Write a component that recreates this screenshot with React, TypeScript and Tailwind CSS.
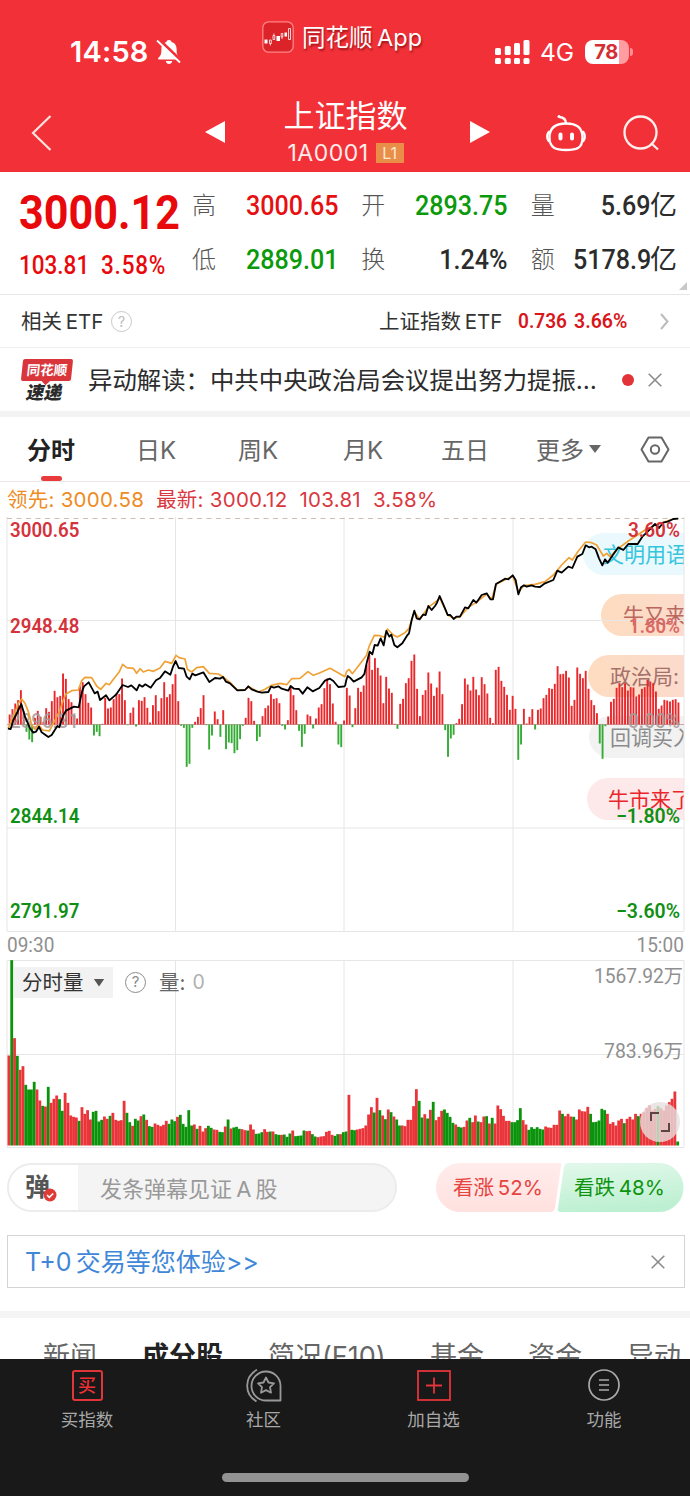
import type { ReactNode } from 'react';
import clsx from 'clsx';

// One value per trading minute, in thirds of a pixel. Above / below the zero line.
const MOMENTUM = [
  30, 46, 63, 73, 103, 40, -22, -45, -53, 20, 41, 23, 8, 49, 38, 70, 101, 82, 86, 153, 137, 76, 67, 28, 18, 115, 127, 91, 65, 51,
  -33, -22, -35, 2, 80, 48, 51, 76, 93, 91, 138, 73, -2, 35, 51, -6, 73, 71, 82, 50, 6, 58, 88, 40, 79, 127, 82, 91, 121, 151,
  70, -4, -10, -127, -118, -10, 8, 23, 49, 88, -2, -75, -33, 39, 16, -37, 43, -74, -54, -56, -86, -77, -44, -4, 20, 80, 70, 11, -50, -37,
  25, 49, 57, 91, 77, 79, 64, -4, -15, 13, 113, 88, 43, -19, -67, -28, 30, 25, -12, 18, 51, 61, 109, 138, 121, 63, 8, -60, -68, 12,
  110, 87, -8, 49, 110, 98, 117, 179, 209, 164, 199, 170, 147, 64, 143, 108, 95, 2, -13, 62, 77, 124, 139, 191, 210, 107, 25, 89, 103, 156,
  123, 86, 111, 159, 91, -17, -97, -42, -31, 4, 17, 61, 138, 120, 102, 143, 105, 88, 142, 121, 93, 20, 4, 164, 173, 131, 113, 89, 44, 86,
  47, -106, -60, 47, 3, 23, 46, -15, 44, 48, 79, 89, 109, 107, 122, 175, 151, 152, 161, 141, 56, 74, 171, 152, 139, 161, 107, 73, 58, 34,
  -57, -103, -5, 24, 68, 77, 110, 124, 112, 124, 102, 112, 111, 84, 90, 107, 112, 134, 129, 124, 99, 47, 57, 74, 72, 69, 74, 76, 66,
];

// Same unit. Positive is a rising minute (red), negative a falling one (green).
const VOLUME = [
  270, -556, 322, -269, 227, 238, -182, -168, -168, -191, 168, 135, -119, 117, -176, 128, 140, 150, -139, -104, 158, 128, 90, 86, 84, -74, 115, 95, 106, 78,
  -101, -104, -72, -77, 87, 80, -89, 98, 77, 74, 76, 134, -98, -70, 59, -80, -75, 88, -93, 77, -58, -56, 66, 62, 58, 62, 74, -65, -78, -73,
  86, -92, -65, -56, -106, -60, 63, -50, 59, 42, 52, -59, -53, 48, 47, -41, -40, 57, -78, 51, -54, -56, -50, 49, 46, -45, 63, 48, -35, -36,
  -40, 49, 41, -42, 42, -34, -32, 32, -33, -26, -36, 45, -28, -29, -30, -45, 43, 44, -34, -27, 25, 27, 28, 41, 44, 32, -29, -34, 34, -40,
  -42, 152, -47, -46, 48, 50, 52, 60, 93, 115, -99, 143, -106, 90, -79, 108, -100, 87, -78, -60, 60, 58, 77, 77, 118, 169, -134, -84, 94, -81,
  107, -131, 76, 86, 104, -108, -98, -86, -68, 63, -56, -54, 56, 75, -83, 70, 90, -72, 70, 87, -88, 66, -83, 66, 120, 109, 89, 74, 74, -70,
  -70, -76, -112, 76, 63, -47, -55, -50, -55, -50, -48, 57, 54, 53, 62, 62, 105, -95, 88, 95, 87, -86, 78, 108, 103, 102, 116, -95, -70, -71,
  -75, -110, -106, 95, 65, 70, 60, 75, 80, -67, 80, 86, 78, 95, -88, 95, 100, 112, 120, 105, 110, -118, 112, 105, 120, 130, 140, 162, -12,
];

const PRICE_AM =
  '24,386 32,387 40,360 48,345 64,312 75,350 90,385 100,398 108,395 117,380 125,397 145,411 155,405 172,378 178,382 190,345 198,332 222,320 236,322 246,275 252,259 266,247 276,265 284,280 293,275 300,300 318,286 328,301 348,284 368,255 384,261 394,256 410,271 418,254 427,260 436,253 452,263 468,241 480,234 495,214 511,224 519,200 527,183 536,204 552,206 560,230 569,238 577,221 586,226 610,217 628,246 645,234 660,236 669,231 678,245 690,250 712,271 735,270 745,259 755,268 770,274 785,278 805,276 813,260 822,263 835,259 845,266 865,272 872,258 882,266 897,267 908,281 922,262 938,274 958,264 975,242 990,236 1000,243 1015,261 1035,259';
const PRICE_PM =
  '0,259 4,240 8,228 15,233 26,245 50,232 58,222 66,185 74,155 82,163 89,135 98,137 107,115 116,136 124,93 133,110 139,104 148,135 157,142 172,130 186,107 192,100 200,60 208,32 215,55 224,58 234,44 242,45 250,18 260,30 270,18 276,8 284,-12 300,25 308,45 316,45 326,57 334,50 345,50 360,22 370,25 385,0 394,8 410,-15 425,-20 436,-2 444,-2 453,-48 470,-58 480,-64 490,-62 503,-74 512,-60 520,-17 528,-38 537,-44 545,-40 560,-44 570,-40 585,-39 600,-50 625,-60 637,-88 650,-82 670,-100 682,-96 697,-130 712,-138 722,-164 732,-158 740,-160 752,-152 762,-125 772,-104 780,-122 788,-112 800,-130 820,-158 835,-150 850,-168 878,-168 892,-190 905,-202 930,-228 942,-216 955,-232 968,-235 985,-243 1000,-244';
const LEAD_AM =
  '24,386 40,350 55,310 65,297 75,310 85,335 95,375 105,388 116,375 128,390 148,393 160,370 178,335 190,300 197,283 215,272 235,270 245,242 255,232 275,233 290,258 302,268 318,250 328,254 345,232 358,215 368,193 380,203 400,205 410,220 420,206 430,216 445,210 460,214 480,204 495,184 515,190 528,166 537,173 555,177 562,208 575,216 590,203 610,200 628,220 655,222 668,230 690,247 712,270 735,270 747,260 775,276 795,268 815,256 840,250 860,254 875,236 900,235 924,215 940,226 960,218 990,205 1010,216 1035,230';
const LEAD_PM =
  '0,230 5,214 12,208 22,221 35,205 50,185 65,165 72,140 88,106 105,107 118,112 127,87 145,105 157,111 180,98 192,85 200,60 208,35 224,58 250,22 285,-5 308,45 326,55 345,50 370,22 394,7 425,-18 440,-2 453,-47 503,-72 520,-25 537,-43 570,-47 600,-55 625,-75 650,-105 672,-127 682,-120 700,-147 722,-174 740,-172 755,-165 775,-132 785,-140 795,-130 820,-155 850,-177 900,-210 930,-225 985,-243';

const BAR_STEP = 2.81;

const quotes = [
  { label: '高', value: '3000.65', color: 'text-[#e60f12]' },
  { label: '开', value: '2893.75', color: 'text-[#0b9a0b]' },
  { label: '量', value: '5.69', unit: '亿', color: 'text-[#2c2c2c]' },
  { label: '低', value: '2889.01', color: 'text-[#0b9a0b]' },
  { label: '换', value: '1.24%', color: 'text-[#2c2c2c]' },
  { label: '额', value: '5178.9', unit: '亿', color: 'text-[#2c2c2c]' },
];

const bullets = [
  { text: '文明用语', box: 'top-[16px] left-[583px] pl-[20px] bg-[#e9f9fe] text-[#35c5dc]' },
  { text: '牛又来了', box: 'top-[77px] left-[601px] pl-[22px] bg-linear-to-r from-[#fddcc0] to-[#fbdad2] text-[#b9675f]' },
  { text: '政治局:', box: 'top-[138px] left-[588px] pl-[22px] bg-linear-to-r from-[#fddcc0] to-[#fbdad2] text-[#a5716b]' },
  { text: '回调买入', box: 'top-[199px] left-[589px] pl-[21px] bg-[#f2f2f2] text-[#8c8c8c]' },
  { text: '牛市来了', box: 'top-[261px] left-[587px] pl-[21px] bg-[#fde9ea] text-[#e8262b]' },
];

function Num({ className, children }: { className?: string; children: ReactNode }) {
  return <span className={clsx('inline-block font-[Roboto]', className)}>{children}</span>;
}

function Label({ x, y, w, fill, children, end, weight = 600 }: {
  x: number;
  y: number;
  w: number;
  fill: string;
  children: string;
  end?: boolean;
  weight?: number;
}) {
  return (
    <text
      x={x}
      y={y}
      fill={fill}
      textLength={w}
      lengthAdjust="spacingAndGlyphs"
      textAnchor={end ? 'end' : 'start'}
      fontFamily="Roboto, 'Noto Sans CJK SC', sans-serif"
      fontSize="19.5"
      fontWeight={weight}
    >
      {children}
    </text>
  );
}

function CloseIcon({ className }: { className?: string }) {
  return (
    <svg className={className} viewBox="0 0 14 14" fill="none" stroke="#8c8c8c" strokeWidth="1.6">
      <path d="M.7.7l12.6 12.6M13.3.7L.7 13.3" />
    </svg>
  );
}

function StatusBar() {
  return (
    <div className="flex h-[80px] text-white">
      <div className="mt-[36px] ml-[70px] flex h-[32px] w-[192px] items-center">
        <span className="w-[85px] text-[29px] font-semibold tracking-[0.2px]">14:58</span>
        <svg className="h-[26px] w-[27px]" viewBox="0 0 27 26">
          <path
            d="M14 1c1.600 0 2.400.8 2.600 1.900 3.500 1 5 3.900 5 7.300 0 5.600 1.100 6.700 3 8.600.7.700.4 1.700-.6 1.700H4c-1 0-1.300-1-.6-1.700 1.900-1.900 3-3 3-8.600 0-3.400 1.500-6.300 5-7.300C11.600 1.800 12.400 1 14 1zM10.800 22h6.400c-.3 1.800-1.500 3-3.200 3s-2.900-1.200-3.200-3z"
            fill="#fff"
          />
          <path d="M3.500 0l23 22" stroke="#f23038" strokeWidth="3" />
          <path d="M2 1.500l23 22" stroke="#fff" strokeWidth="1.800" />
        </svg>
      </div>
      <div className="mt-[20px] flex h-[34px] w-[233px] items-center">
        <svg className="mr-[8px] h-[32px] w-[32px]" viewBox="0 0 32 32">
          <rect x=".8" y=".8" width="30.400" height="30.400" rx="6" fill="#dc2329" stroke="#ff8585" strokeWidth="1.300" />
          <path d="M2.500 18.500h3v4h-3zM14.500 15h3.500v5h-3.500zM22.500 11.500h2.500v4h-2.500z" fill="#fff" />
          <path d="M7.500 19h1.800v3.500H7.500zM11 14.500h1.800v4H11zM19.200 12.500h1.600v3.500h-1.600zM26.500 7.500h2v11h-2zM8.400 22.500v2M11.900 12.500v2M20 16v2" fill="none" stroke="#fff" strokeWidth=".8" />
        </svg>
        <span className="pt-[2px] text-[23.5px] whitespace-nowrap [text-shadow:1px_2px_2px_rgba(90,0,0,0.55)] [word-spacing:-2px]">同花顺 App</span>
      </div>
      <div className="mt-[36px] flex h-[32px] items-center">
        <svg className="h-[25px] w-[36px]" viewBox="0 0 36 25" fill="#fff">
          <rect x="0" y="8" width="6" height="7" rx="1.500" />
          <rect x="9.800" y="6" width="6" height="9" rx="1.500" />
          <rect x="19" y="3" width="6" height="12" rx="1.500" />
          <rect x="28.500" y="0" width="6" height="15" rx="1.500" />
          <rect x="0" y="18" width="6" height="6" rx="1.500" />
          <rect x="9.800" y="18" width="6" height="6" rx="1.500" />
          <rect x="19" y="18" width="6" height="6" rx="1.500" />
          <rect x="28.500" y="18" width="6" height="6" rx="1.500" />
        </svg>
        <span className="ml-[9px] w-[45px] text-[24.5px] tracking-[-0.2px]">4G</span>
        <div className="flex h-[24px] w-[44px] items-center justify-center rounded-[8px] bg-linear-to-r from-white from-78% to-[#ff9da0] to-78% pr-[2px] text-[20px] font-bold tracking-[-0.5px] text-[#d32f35]">
          78
        </div>
        <div className="ml-[1px] h-[8px] w-[3px] rounded-r-full bg-[#ff8f93]" />
      </div>
    </div>
  );
}

function TitleBar() {
  return (
    <div className="flex h-[92px] items-center text-white">
      <svg className="mt-[13px] ml-[31px] h-[36px] w-[21px]" viewBox="0 0 21 36" fill="none" stroke="#ffe3df" strokeWidth="2.200">
        <path d="M19.500 1L2 18l17.500 17" />
      </svg>
      <svg className="mt-[11px] ml-[153px] h-[22px] w-[20px]" viewBox="0 0 20 22" fill="#fff">
        <path d="M20 0v22L0 11z" />
      </svg>
      <div className="flex w-[241px] flex-col items-center pt-[9px]">
        <h1 className="text-[31px] leading-[40px]">上证指数</h1>
        <div className="mt-[5px] flex h-[24px] items-center text-[23px] text-[#ffeceb]">
          <span className="tracking-[0.5px]">1A0001</span>
          <span className="ml-[7px] flex h-[20px] w-[28px] items-center justify-center bg-[#e98e48] text-[16px] text-[#ffe9cf]">L1</span>
        </div>
      </div>
      <svg className="mt-[11px] ml-[4px] h-[22px] w-[20px]" viewBox="0 0 20 22" fill="#fff">
        <path d="M0 0v22l20-11z" />
      </svg>
      <svg className="mt-[13px] ml-[56px] h-[38px] w-[40px]" viewBox="0 0 40 38" fill="none" stroke="#fff" strokeWidth="2.300">
        <path d="M20 9.500c9 0 16.500 2.500 16.500 14S30 36 20 36 3.500 34 3.500 23.500 11 9.500 20 9.500z" />
        <path d="M3.500 17.500c-3 2-3 8 0 10M36.500 17.500c3 2 3 8 0 10" />
        <path d="M20 9.500c0-4-2-6-6.500-6.500" />
        <circle cx="13" cy="2.500" r="1.500" fill="#fff" stroke="none" />
        <path d="M14.500 20.500v4M26 20.500v4" strokeWidth="4" strokeLinecap="round" />
      </svg>
      <svg className="mt-[13px] ml-[37px] h-[36px] w-[36px]" viewBox="0 0 36 36" fill="none" stroke="#ffefed" strokeWidth="2.300">
        <circle cx="17.500" cy="17.500" r="16" />
        <path d="M28 28l7 6.500" />
      </svg>
    </div>
  );
}

function QuotePanel() {
  return (
    <section className="relative flex h-[123px] border-b border-[#e6e6e6]">
      <div className="w-[173px] pl-[19px] text-[#e8090c]">
        <Num className="mt-[12px] block h-[58px] origin-left scale-x-[0.88] text-[49px] leading-[58px] font-bold">3000.12</Num>
        <div className="mt-[9px] flex text-[25px] leading-[30px] font-medium">
          <Num className="w-[84px] origin-left scale-x-[0.9]">103.81</Num>
          <Num className="origin-left scale-x-[0.9] tracking-[0.9px]">3.58%</Num>
        </div>
      </div>
      <div className="mt-[7px] ml-[19px] grid h-[108px] w-[485px] grid-cols-3 grid-rows-2 gap-x-[23px]">
        {quotes.map((q) => (
          <div key={q.label} className="flex items-center justify-between">
            <span className="text-[24px] font-light text-[#555]">{q.label}</span>
            <span className={clsx('flex items-center', q.color)}>
              <Num className="origin-right scale-x-[0.93] text-[27px] font-medium">{q.value}</Num>
              {q.unit && <span className="-ml-px text-[27px]">{q.unit}</span>}
            </span>
          </div>
        ))}
      </div>
      <div className="absolute right-[3px] bottom-[4px] h-[8px] w-[8px] bg-[#c8c8c8] [clip-path:polygon(100%_0,100%_100%,0_100%)]" />
    </section>
  );
}

function EtfRow() {
  return (
    <section className="flex h-[53px] items-center border-b border-[#f0f0f0] pl-[21px] text-[20.5px] text-[#333]">
      <span className="w-[90px] pt-[2px] whitespace-nowrap [word-spacing:-2px]">相关 ETF</span>
      <span className="flex h-[21px] w-[21px] items-center justify-center rounded-full border-[1.5px] border-[#c8c8c8] text-[14px] text-[#bbb]">?</span>
      <span className="ml-[247px] w-[139px] pt-[2px] whitespace-nowrap [word-spacing:-2px]">上证指数 ETF</span>
      <Num className="w-[56px] origin-left scale-x-[0.93] text-[20.5px] font-semibold text-[#d9161b]">0.736</Num>
      <Num className="w-[86px] origin-left scale-x-[0.95] text-[20.5px] font-semibold text-[#d9161b]">3.66%</Num>
      <svg className="h-[17px] w-[9px]" viewBox="0 0 9 17" fill="none" stroke="#bbb" strokeWidth="2">
        <path d="M1 1l6.500 7.500L1 16" />
      </svg>
    </section>
  );
}

function NewsRow() {
  return (
    <section className="flex h-[63px] items-center pl-[22px]">
      <div className="flex w-[66px] flex-col">
        <div className="relative flex h-[22px] w-[50px] -skew-x-6 items-center justify-center rounded-[2px] bg-[#d9363c] text-[13.5px] font-bold text-white">
          同花顺
          <span className="absolute -bottom-[3px] left-[22px] h-[6px] w-[6px] rotate-45 bg-[#d9363c]" />
        </div>
        <div className="h-[20px] -skew-x-12 pl-[5px] text-[18px] leading-[23px] font-black text-[#2b2b2b]">速递</div>
      </div>
      <p className="w-[534px] pt-[2px] text-[24.4px] whitespace-nowrap text-[#2c2c2c]">异动解读：中共中央政治局会议提出努力提振…</p>
      <span className="h-[12px] w-[12px] rounded-full bg-[#e23338]" />
      <CloseIcon className="ml-[14px] h-[14px] w-[14px]" />
    </section>
  );
}

function PeriodTabs() {
  return (
    <nav className="relative flex h-[65px] items-center border-b border-[#f0e8e8] pt-[3px] text-[24px] text-[#666]">
      <span className="ml-[27px] w-[109px] font-bold text-[#222]">分时</span>
      <span className="w-[102px]">日K</span>
      <span className="w-[105px]">周K</span>
      <span className="w-[98px]">月K</span>
      <span className="w-[95px]">五日</span>
      <span className="w-[53px] whitespace-nowrap">更多</span>
      <span className="mb-[3px] h-[8px] w-[12px] bg-[#666] [clip-path:polygon(0_0,100%_0,50%_100%)]" />
      <svg className="mb-[3px] ml-[39px] h-[27px] w-[30px]" viewBox="0 0 30 27" fill="none" stroke="#666" strokeWidth="2">
        <path d="M8.500 1.500h13l7 12-7 12h-13l-7-12z" strokeLinejoin="round" />
        <circle cx="15" cy="13.500" r="4.200" />
      </svg>
      <span className="absolute bottom-0 left-[41px] h-[5px] w-[21px] rounded-full bg-[#e93a3c]" />
    </nav>
  );
}

function PriceChart() {
  return (
    <section className="relative h-[415px]">
      <div className="absolute inset-y-0 left-0 w-[684px] overflow-hidden">
        {bullets.map((b) => (
          <div key={b.text} className={clsx('absolute flex h-[42px] w-[140px] items-center rounded-l-full pt-[2px] text-[21px] whitespace-nowrap', b.box)}>
            {b.text}
          </div>
        ))}
      </div>
      <svg className="relative block h-[415px] w-[690px]" viewBox="0 517 690 415" fill="none">
        <path d="M7 517V931.500H684V517M175.500 517V931M344 517V931M513 517V931M7 620.500H684M7 828H684" stroke="#e6e6e6" />
        <path d="M7 518.500H684" stroke="#cdbfae" strokeDasharray="5 4.500" />
        <path d="M7 724.500H684" stroke="#c9a8a8" />
        {MOMENTUM.map((v, i) => (
          <rect
            key={i}
            x={8.7 + i * BAR_STEP}
            y={v > 0 ? 724.5 - v / 3 : 724.5}
            width="1.900"
            height={Math.abs(v) / 3}
            fill={v > 0 ? '#e8282b' : '#35ab35'}
          />
        ))}
        <g opacity=".85">
          <Label x={10} y={728} w={69} fill="#a79a9a" weight={500}>2896.31</Label>
          <Label x={680} y={728} w={52} fill="#a79a9a" end weight={500}>0.00%</Label>
        </g>
        <g strokeLinejoin="round" strokeWidth="5">
          <g transform="translate(0 600) scale(.33333)">
            <polyline points={LEAD_AM} stroke="#efa136" />
            <polyline points={PRICE_AM} stroke="#000" strokeWidth="5.500" />
          </g>
          <g transform="translate(345 600) scale(.33333)">
            <polyline points={LEAD_PM} stroke="#efa136" />
            <polyline points={PRICE_PM} stroke="#000" strokeWidth="5.500" />
          </g>
        </g>
        <Label x={10} y={537} w={69.5} fill="#d5333b">3000.65</Label>
        <Label x={10} y={632.5} w={69.5} fill="#d5333b">2948.48</Label>
        <Label x={10} y={823} w={69.5} fill="#0f8f14">2844.14</Label>
        <Label x={10} y={918} w={69.5} fill="#0f8f14">2791.97</Label>
        <Label x={680} y={537} w={52} fill="#d5333b" end>3.60%</Label>
        <Label x={680} y={632.5} w={51} fill="#dc6a66" end>1.80%</Label>
        <Label x={680} y={823} w={64} fill="#0f8f14" end>−1.80%</Label>
        <Label x={680} y={918} w={64} fill="#0f8f14" end>−3.60%</Label>
      </svg>
    </section>
  );
}

function VolumeChart() {
  return (
    <section className="relative h-[188px]">
      <svg className="block h-[188px] w-[690px]" viewBox="0 960 690 188" fill="none">
        <path d="M7 960.500H684V1147.500H7zM175.500 960V1147M344 960V1147M513 960V1147M7 1054.500H684" stroke="#e6e6e6" />
        {VOLUME.map((v, i) => (
          <rect
            key={i}
            x={7.5 + i * BAR_STEP}
            y={1145.5 - Math.abs(v) / 3}
            width={BAR_STEP}
            height={Math.abs(v) / 3}
            fill={v > 0 ? '#e93539' : '#0b930b'}
          />
        ))}
        <Label x={683} y={982.5} w={89} fill="#8f8f8f" end weight={400}>1567.92万</Label>
        <Label x={683} y={1058} w={79} fill="#8f8f8f" end weight={400}>783.96万</Label>
      </svg>
      <div className="absolute top-[7px] left-[14px] flex h-[31px] items-center text-[20.5px] text-[#333]">
        <span className="flex h-[31px] w-[99px] items-center bg-[#f2f2f2] pl-[8px]">
          <span className="pt-[2px]">分时量</span>
          <span className="ml-[10px] h-[8px] w-[11px] bg-[#555] [clip-path:polygon(0_0,100%_0,50%_100%)]" />
        </span>
        <span className="ml-[12px] flex h-[21px] w-[21px] items-center justify-center rounded-full border-[1.5px] border-[#8c8c8c] text-[15px] text-[#8c8c8c]">?</span>
        <span className="ml-[13px] pt-[2px] text-[#666]">量:</span>
        <span className="ml-[7px] pt-[1px] text-[19.5px] text-[#b0b0b0]">0</span>
      </div>
      <div className="absolute top-[142px] left-[640px] flex h-[40px] w-[40px] items-center justify-center rounded-full bg-[#e6dede]/80">
        <svg className="h-[20px] w-[20px]" viewBox="0 0 20 20" fill="none" stroke="#5d4444" strokeWidth="2">
          <path d="M1 9V1h8M19 11v8h-8" />
        </svg>
      </div>
    </section>
  );
}

function BulletInput() {
  return (
    <section className="mt-[15px] flex h-[49px] pl-[7px]">
      <div className="flex h-[49px] w-[390px] overflow-hidden rounded-full border-2 border-[#ececec] bg-[#f4f4f4]">
        <div className="relative w-[69px] bg-white pt-[3px] pl-[16px] text-[25px] leading-[38px] font-bold text-[#555]">
          弹
          <svg className="absolute top-[23px] left-[34px] h-[14px] w-[14px]" viewBox="0 0 14 14" fill="none">
            <circle cx="7" cy="7" r="6.500" fill="#df3a35" />
            <path d="M4 7l2.300 2.300L10.200 5.500" stroke="#fff" strokeWidth="1.600" />
          </svg>
        </div>
        <span className="pl-[22px] text-[22px] leading-[48px] whitespace-nowrap text-[#999] [word-spacing:-2px]">发条弹幕见证 A 股</span>
      </div>
      <div className="relative ml-[38px] flex h-[49px] w-[249px] items-center text-[20.5px]">
        <svg className="absolute inset-0 h-[49px] w-[249px]" viewBox="0 0 249 49">
          <defs>
            <linearGradient id="up" x2="0" y2="1">
              <stop stopColor="#ffeceb" />
              <stop offset="1" stopColor="#ffe1df" />
            </linearGradient>
            <linearGradient id="down" x2=".2" y2="1">
              <stop stopColor="#e3f8eb" />
              <stop offset="1" stopColor="#bdf0d2" />
            </linearGradient>
          </defs>
          <path d="M25.500 0H124q3 0 2 3l-6 42q-1 4-5 4H25.500a24.500 24.500 0 010-49z" fill="url(#up)" />
          <path d="M133 0h91a24.500 24.500 0 010 49H126q-4 0-3-4l6-41q1-4 4-4z" fill="url(#down)" />
        </svg>
        <span className="relative w-[121px] pt-[2px] pl-[18px] whitespace-nowrap text-[#e8443f] [word-spacing:-2px]">看涨 52%</span>
        <span className="relative pt-[2px] pl-[18px] whitespace-nowrap text-[#0f930f] [word-spacing:-2px]">看跌 48%</span>
      </div>
    </section>
  );
}

function TabBar() {
  return (
    <footer className="relative h-[137px] bg-[#191919] pt-[10px]">
      <div className="grid grid-cols-[174px_179px_161px_180px] justify-items-center text-[17.500px] leading-[26px] text-[#a8a8a8]">
        <div className="flex flex-col items-center">
          <div className="mt-[1px] mb-[6px] flex h-[31px] w-[31px] items-center justify-center rounded-[3px] border-2 border-[#e2353a] text-[18px] leading-none font-medium text-[#ee3035]">买</div>
          买指数
        </div>
        <div className="flex flex-col items-center">
          <svg className="mb-[5px] h-[33px] w-[36px]" viewBox="0 0 36 33" fill="none" stroke="#999" strokeWidth="1.800">
            <path d="M34.500 31.500V16.500A14.500 14.500 0 1020 31.500z" strokeLinejoin="round" />
            <path d="M11 .8C-2 8-2 25 10.500 32.500" />
            <path d="M20 8.500l2.500 5 5.500.8-4 3.900 1 5.500-5-2.600-5 2.600 1-5.500-4-3.900 5.500-.8z" strokeLinejoin="round" />
          </svg>
          社区
        </div>
        <div className="flex flex-col items-center">
          <svg className="mt-[1px] mb-[6px] h-[31px] w-[34px]" viewBox="0 0 34 31" fill="none" stroke="#e2353a" strokeWidth="1.800">
            <rect x="1" y="1" width="32" height="29" />
            <path d="M17 7.500v16M9 15.500h16" />
          </svg>
          加自选
        </div>
        <div className="flex flex-col items-center">
          <svg className="mb-[6px] h-[32px] w-[32px]" viewBox="0 0 32 32" fill="none" stroke="#aaa" strokeWidth="1.700">
            <circle cx="16" cy="16" r="15" />
            <path d="M11 11h10M11 16h10M11 21h10" />
          </svg>
          功能
        </div>
      </div>
      <div className="absolute bottom-[14px] left-[222px] h-[9px] w-[247px] rounded-full bg-[#929292]" />
    </footer>
  );
}

export default function App() {
  return (
    <div className="h-[1496px] w-[690px] overflow-hidden bg-white font-[Inter,'Noto_Sans_CJK_SC',sans-serif]">
      <header className="h-[172px] bg-[#f23038]">
        <StatusBar />
        <TitleBar />
      </header>
      <QuotePanel />
      <EtfRow />
      <NewsRow />
      <div className="h-[6px] bg-[#f3f3f3]" />
      <PeriodTabs />
      <div className="flex h-[35px] items-center gap-[12px] pt-[2px] pl-[7px] text-[20.5px] tracking-[0.25px] whitespace-nowrap text-[#d9383f]">
        <span className="text-[#ee8b22]">领先: 3000.58</span>
        <span>最新: 3000.12</span>
        <span>103.81</span>
        <span>3.58%</span>
      </div>
      <PriceChart />
      <div className="flex h-[28px] items-center justify-between pr-[6px] pb-[3px] pl-[7px] text-[20px] text-[#8f8f8f]">
        <Num className="origin-left scale-x-[0.95]">09:30</Num>
        <Num className="origin-right scale-x-[0.95]">15:00</Num>
      </div>
      <VolumeChart />
      <BulletInput />
      <div className="mt-[23px] mr-[5px] ml-[7px] flex h-[53px] items-center justify-between border border-[#d4d4d4] pr-[19px] pl-[17px] text-[25px] text-[#4087d8]">
        <span className="pt-[3px] [word-spacing:-3px]">T+0 交易等您体验&gt;&gt;</span>
        <CloseIcon className="h-[14px] w-[14px]" />
      </div>
      <div className="mt-[23px] h-[7px] bg-[#f4f4f4]" />
      <div className="flex h-[41px] overflow-hidden pt-[19px] text-[27px] leading-[40px] whitespace-nowrap text-[#666]">
        <span className="ml-[43px] w-[99px]">新闻</span>
        <span className="w-[126px] font-bold text-[#222]">成分股</span>
        <span className="w-[162px]">简况(F10)</span>
        <span className="w-[98px]">基金</span>
        <span className="w-[99px]">资金</span>
        <span>异动</span>
      </div>
      <TabBar />
    </div>
  );
}
